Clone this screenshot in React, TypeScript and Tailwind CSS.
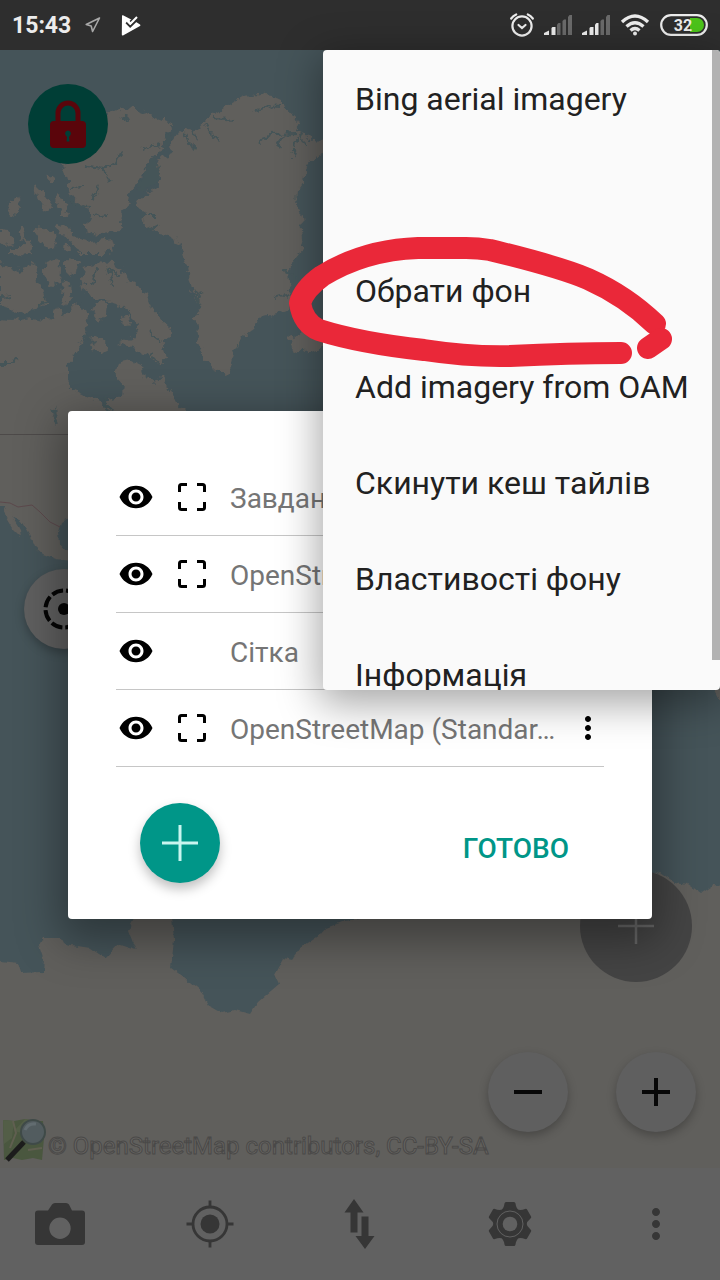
import React from "react";
import { MdMoreVert, MdVisibility } from "react-icons/md";

type Layer = {
  name: string;
  extent?: boolean;
  menu?: boolean;
};

const layers: Layer[] = [
  { name: "Завдання", extent: true },
  { name: "OpenStreet", extent: true },
  { name: "Сітка" },
  { name: "OpenStreetMap (Standar…", extent: true, menu: true },
];

// the empty entry is a disabled item without a label
const menuItems = [
  "Bing aerial imagery",
  "",
  "Обрати фон",
  "Add imagery from OAM",
  "Скинути кеш тайлів",
  "Властивості фону",
  "Інформація",
];

/* ---------- Status bar ---------- */

function SignalIcon({ level }: { level: number }) {
  const bars = [
    "M0 20V18L5 15.500V20Z",
    "M7.500 20V13L8.500 12H11.500V20Z",
    "M13 20V9.500L14.500 8H16.500V20Z",
    "M18.500 20V6L20 4.500H22V20Z",
    "M24 20V2L25.500 0H28V20Z",
  ];
  return (
    <svg width="28" height="20" viewBox="0 0 28 20">
      {bars.map((d, i) => (
        <path key={d} d={d} fill={i < level ? "#ececec" : "#6a6a6a"} />
      ))}
    </svg>
  );
}

function StatusBar() {
  return (
    <header className="flex h-[50px] shrink-0 items-center justify-between bg-[#2e2e2e] px-3 text-[#ececec]">
      <div className="flex items-center">
        <span className="pt-[2px] text-[23px] leading-7 font-bold">15:43</span>
        <svg className="ml-[14px]" width="16" height="16" viewBox="0 0 16 16" fill="none" stroke="#a8a8a8" strokeWidth="1.6" strokeLinejoin="round">
          <path d="M14.500 1L1.200 7.500L6.200 9L7.600 14.500Z" />
        </svg>
        <svg className="ml-5" width="20" height="21" viewBox="0 0 20 21">
          <path d="M1 .8Q1 0 2 .3L15.500 7.200L19 9.500Q20 10.300 19 11L2 20.500Q.8 20.800 .8 19.500Z" fill="#fff" />
          <path d="M5.200 7.500L9.200 11.500L17.500 3.500" fill="none" stroke="#2e2e2e" strokeWidth="2" />
          <path d="M9.500 7L15.500 1.500" fill="none" stroke="#2e2e2e" strokeWidth="3" />
          <path d="M7 6.500L9.300 8.800L16 2" fill="none" stroke="#fff" strokeWidth="2" />
        </svg>
      </div>
      <div className="flex items-center gap-[10px]">
        <svg width="24" height="24" viewBox="0 0 24 24" fill="none" stroke="#ececec" strokeWidth="2.200" strokeLinecap="round">
          <circle cx="12" cy="13" r="9.600" />
          <path d="M8.500 12L12 15L15.500 12" />
          <path d="M1.200 5.500Q3.200 2.800 6.200 1.500M22.800 5.500Q20.800 2.800 17.800 1.500" />
        </svg>
        <SignalIcon level={2} />
        <SignalIcon level={3} />
        <svg width="30" height="22" viewBox="0 0 30 22" fill="none" stroke="#ececec" strokeWidth="3.300">
          <path d="M2 8Q15 -4 28 8M6.500 12.500Q15 5 23.500 12.500M10.500 16.500Q15 12.500 19.500 16.500" />
          <circle cx="15" cy="19.500" r="2" fill="#ececec" stroke="none" />
        </svg>
        <svg width="48" height="22" viewBox="0 0 48 22">
          <rect x="1.200" y="1.200" width="45.600" height="19.600" rx="9.800" fill="none" stroke="#ececec" strokeWidth="2.200" />
          <path d="M30 4H37A7 7 0 0 1 37 18H30Z" fill="#4cc41a" />
          <text x="23" y="16.500" textAnchor="middle" fontSize="16" fontWeight="700" fill="#ececec">
            32
          </text>
        </svg>
      </div>
    </header>
  );
}

/* ---------- Map ---------- */

const LAND = "#615f5b";
const WATER = "#455459";

function WorldMap() {
  return (
    <svg className="absolute inset-0 h-full w-full" viewBox="0 50 720 1118" preserveAspectRatio="xMidYMid slice" aria-hidden="true">
      <defs>
        <filter id="coast" x="0" y="0" width="720" height="1168" filterUnits="userSpaceOnUse">
          <feTurbulence type="fractalNoise" baseFrequency="0.13" numOctaves="3" seed="4" />
          <feDisplacementMap in="SourceGraphic" scale="11" xChannelSelector="R" yChannelSelector="G" />
        </filter>
        <filter id="shore" x="-20" y="400" width="780" height="790" filterUnits="userSpaceOnUse">
          <feTurbulence type="fractalNoise" baseFrequency="0.15" numOctaves="2" seed="9" />
          <feDisplacementMap in="SourceGraphic" scale="5" xChannelSelector="R" yChannelSelector="G" />
        </filter>
      </defs>
      <rect y="50" width="720" height="1118" fill={WATER} />

      <g filter="url(#coast)">
        <g fill={LAND}>
          {/* Greenland */}
          <path d="M171 142L176 134L186 129L196 130L203 121L212 115L224 108L236 100L245 96L258 94L272 96L281 100L284 107L294 116L300 121L297 129L304 135L312 141L330 142L324 152L312 160L305 170L303 181L297 190L296 205L301 216L303 240L299 255L294 262L289 272L291 290L289 307L276 313L262 317L254 329L241 339L235 352L230 370L226 374L213 369L204 357L199 345L195 322L202 308L191 290L187 270L181 250L176 238L166 233L156 232L146 226L141 220L148 214L139 209L135 201L146 193L157 190L161 178L153 172L155 162L164 157L172 155Z" />
          {/* Ellesmere */}
          <path d="M105 116L123 108L136 109L149 114L159 118L167 121L172 128L169 136L163 144L157 153L150 162L143 172L137 182L130 191L127 204L121 216L119 232L104 234L90 232L82 226L92 218L88 209L78 203L72 196L67 184L66 173L62 164L80 160Z" />
          {/* Baffin */}
          <path d="M84 267L95 262L113 263L123 270L129 281L141 288L149 299L153 309L161 319L171 328L168 340L162 347L166 358L160 363L150 357L136 350L120 343L134 337L139 328L132 315L120 305L102 300L86 294L82 278Z" />
          {/* Devon, Victoria and the smaller Arctic islands */}
          <path d="M66 226L74 237L92 242L112 239L115 250L100 254L80 254L73 244L62 232Z" />
          <path d="M0 262L10 268L20 273L29 262L35 264L37 280L43 293L47 304L36 309L20 313L8 308L0 306Z" />
          <path d="M10 200L19 196L22 205L17 215L9 213ZM35 187L42 190L51 203L52 210L44 209L38 200ZM56 195L62 198L67 210L60 210ZM49 174L54 177L52 183L48 179Z" />
          <path d="M0 229L8 230L15 244L5 246L0 242ZM18 227L24 225L27 238L20 240ZM32 228L45 229L56 233L57 242L48 248L40 240ZM58 224L70 228L68 236L60 235ZM60 209L70 212L66 219L60 216Z" />
          <path d="M8 248L20 248L26 238L33 246L32 253L17 256L8 254ZM38 234L53 232L57 246L45 249ZM63 241L68 243L70 251L62 250Z" />
          <path d="M46 262L56 258L61 268L60 284L52 286L44 275ZM65 259L79 260L77 270L70 276L65 271ZM63 281L71 284L73 301L66 306L61 294Z" />
          <path d="M95 303L107 304L106 315L98 322L92 313ZM92 336L104 341L108 349L95 352L90 345ZM121 317L130 315L131 323L123 325Z" />
          {/* Iceland */}
          <path d="M288 334L294 338L302 331L322 330L330 341L318 350L303 353L292 347Z" />
          {/* Mainland */}
          <path d="M-20 319L12 321L30 318L54 321L56 307L62 315L72 309L77 303L84 309L90 318L86 330L81 346L73 356L67 368L67 379L73 389L88 396L103 402L122 396L123 386L116 378L119 362L131 360L143 366L146 378L154 384L161 376L170 393L176 402L184 409L190 430L190 470L-20 470Z" />
        </g>
        <g fill="none" stroke={WATER} strokeWidth="2.200">
          <path d="M184 133L194 150M192 128L197 144M205 124L220 142M214 118L234 120M260 142L272 134L298 133M277 146L284 136M292 158L298 136M306 146L300 134M256 112L268 106L280 107" />
          <path d="M84 165L102 168L117 163L122 151M102 168L110 182M72 188L84 186M92 200L100 186M142 150L160 144M118 115L128 120M94 217L108 215M70 200L90 208" />
          <path d="M140 215L155 215M147 232L160 225M192 296L202 292M202 308L194 290M275 298L290 294M283 270L296 276" />
          <path d="M91 285L98 266M112 285L108 270L122 275M0 363L10 363L20 357M0 298L12 296M45 300L36 310M84 334L96 344M150 332L162 343M150 352L158 361" />
        </g>
        <path d="M156 158L171 142L172 131L157 153L143 173L136 188L148 190L160 178Z" fill={WATER} />
        <path d="M54 410L58 424M104 396L110 412" stroke={WATER} strokeWidth="4" />
      </g>

      <g filter="url(#shore)">
        {/* Mexico */}
        <path d="M-20 450H190V517H70L61 522L58 532L59 543L66 551L80 552V562L56 559L43 554L34 546L29 534L21 521L9 515L4 506H-20Z" fill={LAND} />
        <path d="M3 508L9 510L14 520L20 530L21 537L12 528L6 518Z" fill={LAND} />
        {/* Northern Eurasia on the right edge */}
        <path d="M713 688H730V706L720 701Z" fill={LAND} />
        {/* Antarctica */}
        <path d="M-20 960L0 961L18 963L21 973L43 972L44 960L39 945L43 938L62 938L65 944L90 948L105 958L118 944L136 950L128 930L135 916H172L174 940L171 968L185 978L201 991L208 1005L222 1013L235 1010L250 1014L258 1002L279 984L275 975L284 958L292 960L301 948L320 935L326 928L345 921L400 914L580 900L640 882L660 872L674 882L688 884L701 893L713 885L740 888V1190H-20Z" fill={LAND} />
      </g>

      <path d="M0 434.500H70" stroke="#4d4a49" />
      <path d="M0 502L10 503L18 507L32 505L40 512L50 522L60 527" fill="none" stroke="#5c494c" />
    </svg>
  );
}

function OsmLogo() {
  return (
    <svg width="44" height="46" viewBox="0 0 44 46" aria-hidden="true">
      <path d="M1 2L12 3L23 1L33 3L41 3L42 20L40 42L31 40L20 42L11 40L2 42Z" fill="#4a573f" />
      <path d="M1 2L12 3L10 20L2 26ZM23 1L33 3L20 15L12 13Z" fill="#535e47" />
      <path d="M11 3L14 15L8 30M26 32L40 30" fill="none" stroke="#605f50" strokeWidth="2" />
      <circle cx="31" cy="14" r="12" fill="#525c5f" stroke="#3f4a48" strokeWidth="2" />
      <path d="M23 12Q26 5 34 6" fill="none" stroke="#626c70" strokeWidth="3" />
      <path d="M22 24L5 42" stroke="#1c1c1c" strokeWidth="5" />
    </svg>
  );
}

function MapView() {
  const roundButton =
    "flex size-20 items-center justify-center rounded-full bg-[#5f5f5f] shadow-[0_4px_10px_rgba(0,0,0,0.25)]";

  return (
    <main className="relative flex-1 overflow-hidden">
      <WorldMap />

      <button aria-label="Lock" className="absolute top-[34px] left-7 flex size-20 items-center justify-center rounded-full bg-[#003e36]">
        <svg width="36" height="48" viewBox="0 0 36 48">
          <path d="M8 24V13A10 10 0 0 1 28 13V24" fill="none" stroke="#5a050b" strokeWidth="5" />
          <path fillRule="evenodd" d="M4 21H32Q36 21 36 25V44Q36 48 32 48H4Q0 48 0 44V25Q0 21 4 21ZM18 30.500A3 3 0 0 0 15.500 35L17 37L16.500 41.500H19.500L19 37L20.500 35A3 3 0 0 0 18 30.500Z" fill="#5a050b" />
        </svg>
      </button>

      <button aria-label="GPS" className={`${roundButton} absolute top-[519px] left-6`}>
        <svg width="42" height="42" viewBox="0 0 42 42">
          <circle cx="21" cy="21" r="18.500" fill="none" stroke="#050505" strokeWidth="4" strokeDasharray="11.500 3.030" strokeDashoffset="-1.500" />
          <circle cx="21" cy="21" r="6" fill="#050505" />
        </svg>
      </button>

      <button aria-label="Edit" className="absolute right-7 bottom-[186px] flex size-28 items-center justify-center rounded-full bg-[#444444]">
        <svg width="36" height="36" viewBox="0 0 36 36" stroke="#666" strokeWidth="2.500">
          <path d="M0 18H36M18 0V36" />
        </svg>
      </button>

      <div className="absolute right-6 bottom-9 flex gap-12">
        <button aria-label="Zoom out" className={roundButton}>
          <svg width="28" height="28" viewBox="0 0 28 28" stroke="#080808" strokeWidth="4">
            <path d="M0 14H28" />
          </svg>
        </button>
        <button aria-label="Zoom in" className={roundButton}>
          <svg width="28" height="28" viewBox="0 0 28 28" stroke="#080808" strokeWidth="4">
            <path d="M0 14H28M14 0V28" />
          </svg>
        </button>
      </div>

      <div className="absolute bottom-1 left-[2px] flex items-end gap-[2px]">
        <OsmLogo />
        <span className="text-2xl leading-9 text-[#676562] [-webkit-text-stroke:1px_#4a4948]">© OpenStreetMap contributors, CC-BY-SA</span>
      </div>
    </main>
  );
}

/* ---------- Bottom toolbar ---------- */

function BottomBar() {
  const item = "flex h-28 w-[120px] items-center justify-center";

  return (
    <nav className="flex shrink-0 justify-between bg-[#616161] pr-2 text-[#363636]">
      <button aria-label="Camera" className={item}>
        <svg width="50" height="42" viewBox="0 0 50 42">
          <path fillRule="evenodd" d="M3 7.500H13L17 1.500Q18 0 20 0H31Q33 0 34 1.500L37 7.500H47Q50 7.500 50 10.500V39Q50 42 47 42H3Q0 42 0 39V10.500Q0 7.500 3 7.500ZM25 14.500A10.700 10.700 0 1 0 25 35.900A10.700 10.700 0 1 0 25 14.500Z" fill="currentColor" />
        </svg>
      </button>
      <button aria-label="Locate" className={item}>
        <svg width="48" height="48" viewBox="0 0 48 48" fill="none" stroke="currentColor" strokeWidth="2.800">
          <circle cx="24" cy="24" r="17" />
          <circle cx="24" cy="24" r="9.500" fill="currentColor" stroke="none" />
          <path d="M24 .5V7M24 41V47.500M.5 24H7M41 24H47.500" />
        </svg>
      </button>
      <button aria-label="Transfer" className={item}>
        <svg width="32" height="52" viewBox="0 0 32 52" fill="currentColor">
          <path d="M10 1L19.500 14.500H13.500V34.500H6.500V14.500H.5Z" />
          <path d="M21 51L30.500 38H24.500V18.500H17.500V38H11.500Z" />
        </svg>
      </button>
      <button aria-label="Settings" className={item}>
        <svg width="44" height="44" viewBox="-22 -22 44 44">
          {[0, 60, 120, 180, 240, 300].map((a) => (
            <path key={a} d="M-5.500 -20.500Q-5.200 -22 -4 -22H4Q5.200 -22 5.500 -20.500Q6 -16 9.500 -13L0 0L-9.500 -13Q-6 -16 -5.500 -20.500Z" fill="currentColor" transform={`rotate(${a})`} />
          ))}
          <circle r="15.500" fill="currentColor" />
          <circle r="13" fill="none" stroke="#616161" strokeWidth="1" />
          <circle r="7.300" fill="#616161" />
        </svg>
      </button>
      <button aria-label="More" className="flex h-28 w-28 items-center justify-center">
        <MdMoreVert size={48} />
      </button>
    </nav>
  );
}

/* ---------- Layers dialog ---------- */

function ExtentIcon() {
  return (
    <svg width="28" height="28" viewBox="0 0 28 28" fill="none" stroke="#000" strokeWidth="3">
      <path d="M1.500 9V3.500Q1.500 1.500 3.500 1.500H9M19 1.500H24.500Q26.500 1.500 26.500 3.500V9M26.500 19V24.500Q26.500 26.500 24.500 26.500H19M9 26.500H3.500Q1.500 26.500 1.500 24.500V19" />
    </svg>
  );
}

function LayersDialog() {
  return (
    <div className="w-full rounded bg-white px-12 pt-12 shadow-[0_14px_44px_8px_rgba(0,0,0,0.35)]">
      <ul>
        {layers.map((layer) => (
          <li key={layer.name} className="flex h-[77px] items-center border-b border-[#c6c6c6]">
            <button aria-label="Visibility" className="flex w-10 justify-center text-black">
              <MdVisibility size={36} />
            </button>
            <div className="ml-4 flex w-10 justify-center">
              {layer.extent && (
                <button aria-label="Zoom to extent">
                  <ExtentIcon />
                </button>
              )}
            </div>
            <span className="ml-[18px] flex-1 pt-1 text-[28px] leading-9 whitespace-nowrap text-[#757575]">{layer.name}</span>
            {layer.menu && (
              <button aria-label="Layer menu" className="flex w-8 justify-center text-black">
                <MdMoreVert size={36} className="shrink-0" />
              </button>
            )}
          </li>
        ))}
      </ul>
      <div className="flex items-center justify-between px-6 py-9">
        <button aria-label="Add layer" className="flex size-20 items-center justify-center rounded-full bg-[#009688] shadow-[0_6px_12px_rgba(0,0,0,0.25)]">
          <svg width="36" height="36" viewBox="0 0 36 36" stroke="#c9f5ef" strokeWidth="3">
            <path d="M0 18H36M18 0V36" />
          </svg>
        </button>
        <button className="px-[11px] pt-3 text-[28px] leading-9 font-medium text-[#009688]">ГОТОВО</button>
      </div>
    </div>
  );
}

/* ---------- Popup menu ---------- */

function BackgroundMenu() {
  return (
    <div className="absolute top-0 right-0 flex h-[640px] overflow-hidden rounded bg-[#fafafa] shadow-[0_10px_40px_4px_rgba(0,0,0,0.35)]">
      <ul className="w-[389px]">
        {menuItems.map((label, i) => (
          <li key={i}>
            <button disabled={!label} className="flex h-24 w-full items-center px-8 pt-[2px] text-left text-[32px] leading-10 whitespace-nowrap text-[#212121]">
              {label}
            </button>
          </li>
        ))}
      </ul>
      <div className="h-[610px] w-2 bg-[#b2b2b2]" />
    </div>
  );
}

// hand drawn marker around the "Обрати фон" entry
function Marker() {
  return (
    <svg className="pointer-events-none absolute top-[180px] right-[35px]" width="400" height="142" viewBox="285 230 400 142" fill="none" stroke="#ea2839" strokeWidth="22" strokeLinecap="round" strokeLinejoin="round">
      <path d="M655 324Q626 296 588 279Q560 267 490 250Q478 248 466 248H418Q364 250 322 276Q304 289 300 303Q303 323 319 330Q360 343 424 350Q470 357 510 356Q570 353 621 353" />
      <path d="M648 348L661 339" />
    </svg>
  );
}

export default function App() {
  return (
    <div className="relative flex min-h-screen w-full flex-col overflow-hidden bg-[#616161] font-[Roboto,'Noto_Sans',sans-serif]">
      <StatusBar />
      <MapView />
      <BottomBar />
      <div className="absolute inset-x-0 top-[50px] bottom-0 flex items-center px-[68px]">
        <LayersDialog />
        <BackgroundMenu />
        <Marker />
      </div>
    </div>
  );
}
